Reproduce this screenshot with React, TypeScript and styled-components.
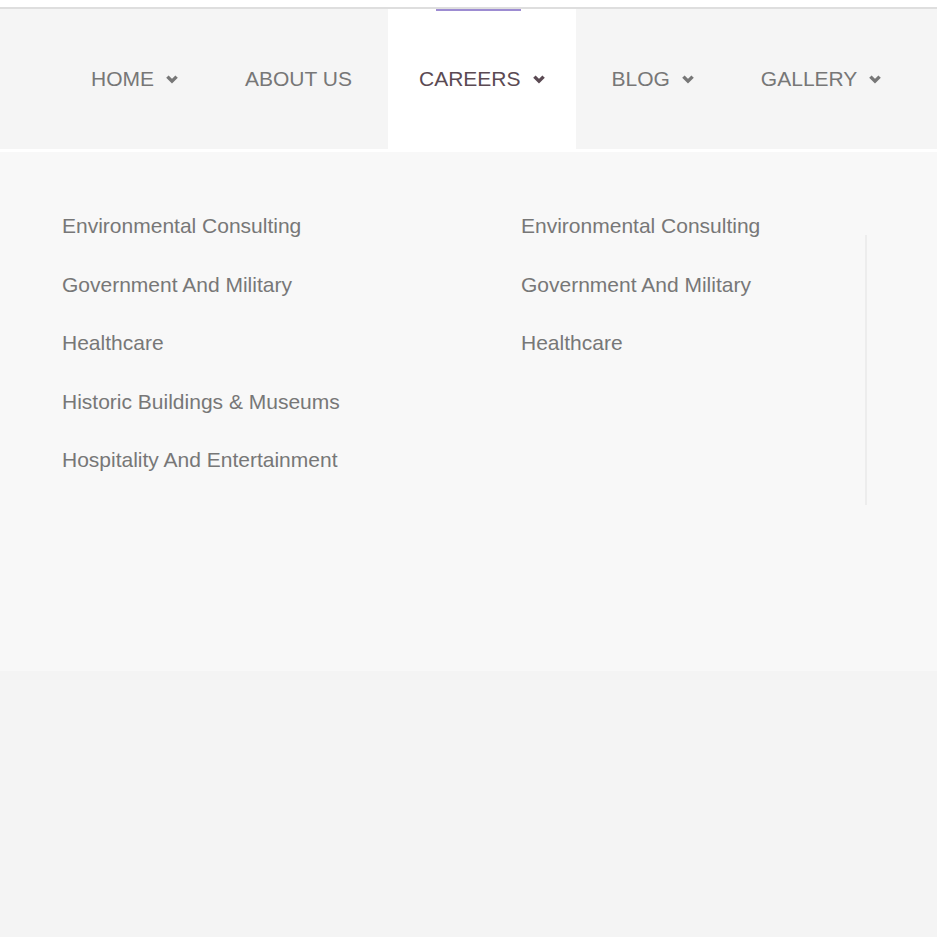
import styled, { createGlobalStyle } from "styled-components";

const GlobalStyle = createGlobalStyle`
  body {
    margin: 0;
    background: #f4f4f4;
    font-family: "Liberation Sans", Arial, sans-serif;
  }
`;

const navItems = [
  { label: "Home", drop: true },
  { label: "About Us", drop: false },
  { label: "Careers", drop: true, active: true },
  { label: "Blog", drop: true },
  { label: "Gallery", drop: true },
];

const leftLinks = [
  "Environmental Consulting",
  "Government And Military",
  "Healthcare",
  "Historic Buildings & Museums",
  "Hospitality And Entertainment",
];

const rightLinks = ["Environmental Consulting", "Government And Military", "Healthcare"];

const Chevron = () => (
  <svg width="12" height="9" viewBox="0 0 12 9">
    <polyline points="1.4,1.6 6,6.2 10.6,1.6" fill="none" stroke="currentColor" strokeWidth="3.4" />
  </svg>
);

export default function App() {
  return (
    <Page>
      <GlobalStyle />
      <TopStrip />
      <NavBar>
        {navItems.map((item) => (
          <NavItem key={item.label} active={item.active}>
            {item.label}
            {item.drop && <Chevron />}
          </NavItem>
        ))}
      </NavBar>
      <Dropdown>
        <LinkList>
          {leftLinks.map((l) => (
            <MenuLink key={l}>{l}</MenuLink>
          ))}
        </LinkList>
        <LinkList>
          {rightLinks.map((l) => (
            <MenuLink key={l}>{l}</MenuLink>
          ))}
        </LinkList>
        <Divider />
      </Dropdown>
    </Page>
  );
}

type navItem = {
  active?: boolean;
};

const Page = styled.div`
  min-height: 937px;
  background: #f4f4f4;
`;

const TopStrip = styled.div`
  height: 7px;
  background: #fff;
  border-bottom: 2px solid #dedede;
`;

const NavBar = styled.nav`
  display: flex;
  align-items: stretch;
  gap: 5px;
  height: 140px;
  padding-left: 60px;
  background: #f5f5f5;
`;

const NavItem = styled.div<navItem>`
  position: relative;
  display: flex;
  align-items: center;
  gap: 12px;
  padding: 0 31px;
  font-size: 21px;
  text-transform: uppercase;
  color: ${(p) => (p.active ? "#5b4a53" : "#777")};
  background: ${(p) => (p.active ? "#fff" : "transparent")};
  svg {
    margin-top: 1px;
  }
  ${(p) =>
    p.active &&
    `
    &::before {
      content: "";
      position: absolute;
      top: 0;
      left: 48px;
      width: 85px;
      height: 2px;
      background: #9d8cd2;
    }
  `}
`;

const Dropdown = styled.div`
  display: grid;
  grid-template-columns: 459px 344px 1fr;
  align-items: start;
  height: 519px;
  padding-left: 62px;
  background: #f8f8f8;
  border-top: 3px solid #fff;
`;

const LinkList = styled.ul`
  display: flex;
  flex-direction: column;
  gap: 34.5px;
  margin: 0;
  padding: 62px 0 0;
  list-style: none;
`;

const MenuLink = styled.li`
  font-size: 21px;
  line-height: 24px;
  color: #777;
  white-space: nowrap;
`;

const Divider = styled.div`
  height: 270px;
  margin-top: 83px;
  border-left: 2px solid #ededed;
`;
